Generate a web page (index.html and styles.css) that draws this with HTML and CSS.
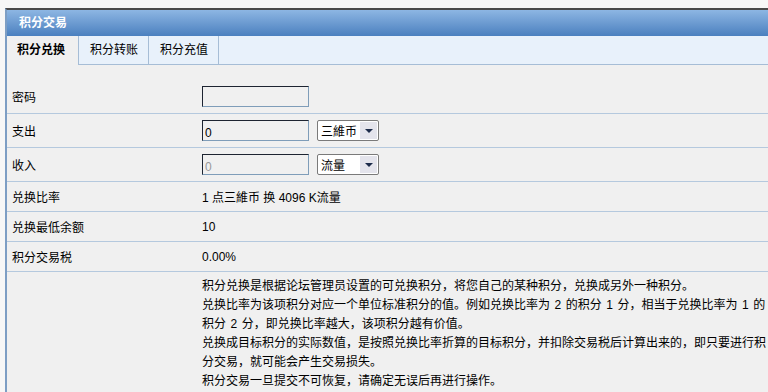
FILE: index.html
```html
<!doctype html>
<html>
<head>
<meta charset="utf-8">
<title>积分交易</title>
<link rel="stylesheet" href="styles.css">
</head>
<body>
<div class="wrap">
	<div class="title">积分交易</div>
	<ul class="tabs">
		<li class="cur">积分兑换</li>
		<li>积分转账</li>
		<li>积分充值</li>
	</ul>
	<div class="form">
		<div class="row tall">
			<div class="label">密码</div>
			<div class="val"><input type="password" class="txt" /></div>
		</div>
		<div class="row tall">
			<div class="label">支出</div>
			<div class="val">
				<input type="text" class="txt" value="0" />
				<div class="sel"><span>三維币</span><i class="arr"></i></div>
			</div>
		</div>
		<div class="row tall">
			<div class="label">收入</div>
			<div class="val">
				<input type="text" class="txt" value="0" disabled />
				<div class="sel"><span>流量</span><i class="arr"></i></div>
			</div>
		</div>
		<div class="row">
			<div class="label">兑换比率</div>
			<div class="val">1 点三維币 换 4096 K流量</div>
		</div>
		<div class="row">
			<div class="label">兑换最低余额</div>
			<div class="val">10</div>
		</div>
		<div class="row">
			<div class="label">积分交易税</div>
			<div class="val">0.00%</div>
		</div>
		<div class="row desc">
			<div class="label"></div>
			<div class="val">
				<p>积分兑换是根据论坛管理员设置的可兑换积分，将您自己的某种积分，兑换成另外一种积分。</p>
				<p>兑换比率为该项积分对应一个单位标准积分的值。例如兑换比率为 2 的积分 1 分，相当于兑换比率为 1 的积分 2 分，即兑换比率越大，该项积分越有价值。</p>
				<p>兑换成目标积分的实际数值，是按照兑换比率折算的目标积分，并扣除交易税后计算出来的，即只要进行积分交易，就可能会产生交易损失。</p>
				<p>积分交易一旦提交不可恢复，请确定无误后再进行操作。</p>
			</div>
		</div>
	</div>
</div>
</body>
</html>
```
FILE: styles.css
```css
*{ margin:0; padding:0; list-style:none; }
body{ background:#f7f7f7; font:12px "Liberation Sans","Noto Sans CJK SC",sans-serif; color:#000; overflow:hidden; }
.wrap{ margin:8px 0 0 5px; border-top:2px solid #4a4a4a; border-left:2px solid #7d9ec4; background:#f0f0f0; height:400px; }
.title{ height:26px; line-height:26px; padding-left:12px; color:#fff; font-weight:bold; background:linear-gradient(#8db6e3,#4b80bf); }
.tabs{ display:flex; height:28px; background:#e8f1fb; border-bottom:1px solid #a6bdd6; }
.tabs li{ padding:0 10px 0 11px; line-height:28px; border-right:1px solid #a6bdd6; }
.tabs .cur{ padding:0 13px 0 10px; background:#f0f0f0; font-weight:bold; height:29px; }
.form{ padding-top:15px; }
.row{ display:flex; align-items:center; min-height:29px; border-bottom:1px solid #b5c9de; }
.row.tall{ min-height:33px; }
.label{ width:195px; box-sizing:border-box; padding-left:5px; flex-shrink:0; }
.val{ display:flex; align-items:center; gap:8px; flex:1; }
.txt{ width:107px; height:21px; box-sizing:border-box; border:1px solid #7f9db9; border-top-color:#1d2431; border-left-color:#1d2431; background:transparent; padding:4px 2px 0; font:12px "Liberation Sans",sans-serif; }
.txt:disabled{ color:#999; }
.sel{ display:flex; align-items:center; justify-content:space-between; width:62px; height:21px; box-sizing:border-box; border:1px solid #7a7a7a; border-radius:2px; background:#fff; padding:1px 1px 1px 3px; }
.arr{ display:flex; align-items:center; justify-content:center; width:17px; height:17px; background:#e4e4ec; }
.arr:after{ content:""; border-left:4px solid transparent; border-right:4px solid transparent; border-top:4px solid #1c2b4a; }
.row.desc{ align-items:flex-start; padding-top:5px; border-bottom:0; }
.desc .val{ display:block; margin-right:-3px; word-spacing:1.2px; }
.desc p{ line-height:19px; }
```
